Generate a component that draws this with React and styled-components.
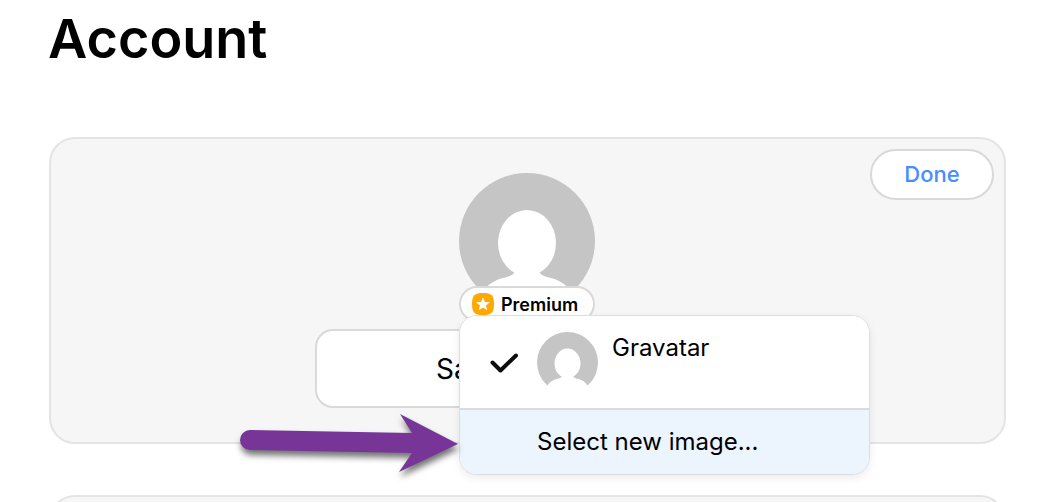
import React, { useState } from 'react';
import styled, { createGlobalStyle } from 'styled-components';

function App() {
  const [name, setName] = useState('Sa');
  return (
    <>
      <GlobalStyle />
      <Page>
        <Title>Account</Title>
        <Card>
          <Profile>
            <Picture>
              <Avatar size={136} />
              <PremiumBadge>
                <PremiumIcon />
                Premium
              </PremiumBadge>
              <ImageMenu />
              <Arrow />
            </Picture>
            <NameInput
              type="text"
              aria-label="Name"
              value={name}
              onChange={e => setName(e.target.value)}
            />
          </Profile>
          <DoneButton type="button">Done</DoneButton>
        </Card>
        <Card />
      </Page>
    </>
  );
}

function ImageMenu() {
  return (
    <Menu role="menu">
      <MenuItem type="button" role="menuitemradio" aria-checked="true">
        <CheckIcon />
        <Avatar size={61} />
        <span>Gravatar</span>
      </MenuItem>
      <MenuItem type="button" role="menuitem" $highlighted>
        Select new image...
      </MenuItem>
    </Menu>
  );
}

function Avatar({ size }) {
  return (
    <AvatarSvg viewBox="0 0 136 136" width={size} height={size} aria-hidden="true">
      <circle cx="68" cy="68" r="68" fill="#c5c5c5" />
      <ellipse cx="68" cy="70" rx="29" ry="33" fill="#fff" />
      <path
        d="M56 97 C56 101 52 103 46 104.500 C35 107 28 112 23 120 L12 136 L124 136 L113 120 C108 112 101 107 90 104.500 C84 103 80 101 80 97 Z"
        fill="#fff"
      />
    </AvatarSvg>
  );
}

function PremiumIcon() {
  return (
    <svg viewBox="0 0 22 22" width="22" height="22" aria-hidden="true">
      <path
        d="M11 0 C19.500 0 22 2.500 22 11 C22 19.500 19.500 22 11 22 C2.500 22 0 19.500 0 11 C0 2.500 2.500 0 11 0 Z"
        fill="#ffa800"
      />
      <path
        d="M11 4.200 L12.900 8.900 L17.900 9.200 L14 12.400 L15.300 17.300 L11 14.600 L6.700 17.300 L8 12.400 L4.100 9.200 L9.100 8.900 Z"
        fill="#fff"
      />
    </svg>
  );
}

function CheckIcon() {
  return (
    <CheckSvg viewBox="0 0 28 22" width="28" height="22" aria-hidden="true">
      <path
        d="M2.500 10.500 L10.500 18.500 L26 3.500"
        fill="none"
        stroke="#0c0c0c"
        strokeWidth="4"
        strokeLinecap="round"
        strokeLinejoin="round"
      />
    </CheckSvg>
  );
}

function Arrow() {
  return (
    <ArrowSvg viewBox="0 0 240 90" width="240" height="90" aria-hidden="true">
      <path
        d="M20 26 L182 29 L170 10 L228 40 L169 68 L182 49 L20 46 A10 10 0 0 1 20 26 Z"
        fill="#783598"
      />
    </ArrowSvg>
  );
}

const GlobalStyle = createGlobalStyle`
  * {
    box-sizing: border-box;
  }
  body {
    margin: 0;
    background: #fff;
    color: #000;
    font-family: Inter, 'Liberation Sans', sans-serif;
  }
  button,
  input {
    font: inherit;
    color: inherit;
  }
`;

const Page = styled.main`
  display: flex;
  flex-direction: column;
  height: 100vh;
  padding: 4px 46px 0 48px;
  overflow: hidden;
`;

const Title = styled.h1`
  flex: none;
  margin: 0 0 63px;
  font-size: 54px;
  line-height: 70px;
  font-weight: 600;
`;

const Card = styled.section`
  display: grid;
  grid-template-columns: 1fr 424px 1fr;
  flex: none;
  min-height: 160px;
  margin-left: 1px;
  padding: 10px 10px 10px 9px;
  border: 2px solid #e4e4e4;
  border-radius: 26px;
  background: #f6f6f6;
  & + & {
    margin-top: 51px;
  }
`;

const Profile = styled.div`
  grid-column: 2;
  display: flex;
  flex-direction: column;
  align-items: center;
  padding: 24px 0;
`;

const Picture = styled.div`
  position: relative;
  width: 136px;
  margin-bottom: 7px;
`;

const AvatarSvg = styled.svg`
  display: block;
  flex: none;
`;

const PremiumBadge = styled.div`
  position: relative;
  display: flex;
  align-items: center;
  gap: 7px;
  height: 36px;
  margin-top: -23px;
  padding: 0 11px;
  border: 2px solid #d9d9d9;
  border-radius: 18px;
  background: #fff;
  font-size: 18px;
  font-weight: 600;
`;

const NameInput = styled.input`
  width: 100%;
  height: 79px;
  padding: 0 119px;
  border: 2px solid #d9d9d9;
  border-radius: 18px;
  background: #fff;
  font-size: 28px;
`;

const DoneButton = styled.button`
  justify-self: end;
  align-self: start;
  width: 124px;
  height: 51px;
  padding: 0 0 2px;
  border: 2px solid #d9d9d9;
  border-radius: 26px;
  background: #fff;
  color: #468eff;
  font-size: 22px;
  font-weight: 500;
`;

const Menu = styled.div`
  position: absolute;
  z-index: 1;
  top: 142px;
  left: 0;
  width: 411px;
  border: 1px solid #dcdfe2;
  border-radius: 18px;
  background: #fff;
  box-shadow: 0 3px 8px rgba(0, 0, 0, 0.08);
  overflow: hidden;
`;

const MenuItem = styled.button`
  display: flex;
  align-items: flex-start;
  width: 100%;
  padding: ${({ $highlighted }) =>
    $highlighted ? '16px 16px 16px 77px' : '16px 16px 15px 30px'};
  border: 0;
  background: ${({ $highlighted }) => ($highlighted ? '#ecf4fe' : '#fff')};
  font-size: 24px;
  line-height: 32px;
  text-align: left;
  & + & {
    border-top: 2px solid #d9dcdf;
  }
  span {
    margin-left: 14px;
  }
`;

const CheckSvg = styled.svg`
  flex: none;
  align-self: center;
  margin-right: 19px;
`;

const ArrowSvg = styled.svg`
  position: absolute;
  z-index: 2;
  top: 231px;
  left: -229px;
  pointer-events: none;
  filter: drop-shadow(1px 5px 3px rgba(0, 0, 0, 0.55));
`;

export default App;
